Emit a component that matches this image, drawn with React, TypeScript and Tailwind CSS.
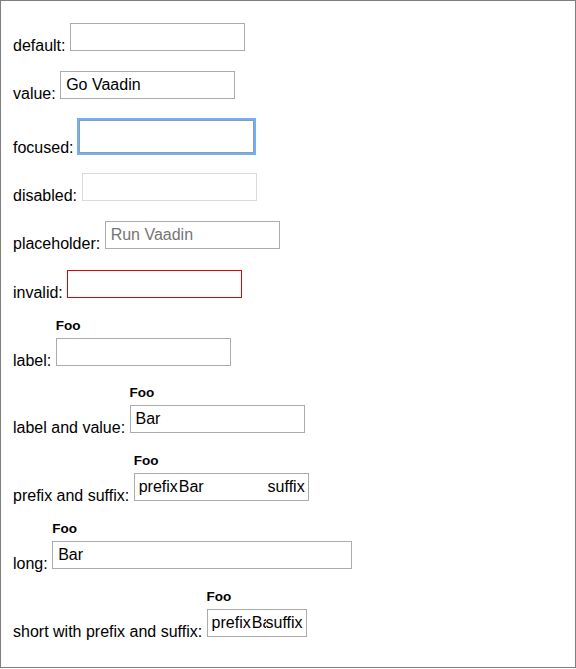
import React from "react";

type FieldProps = {
  width?: string;
  value?: string;
  placeholder?: string;
  prefix?: string;
  suffix?: string;
  variant?: "default" | "focused" | "disabled" | "invalid";
};

function Field({ width = "w-[175px]", value, placeholder, prefix, suffix, variant = "default" }: FieldProps) {
  const border =
    variant === "disabled"
      ? "border-[#dadada]"
      : variant === "invalid"
      ? "border-[#e00000]"
      : variant === "focused"
      ? "border-[#9a9a9a] outline-2 outline-solid outline-[#6ab2ff] ml-[1px] h-[33px]"
      : "border-[#ababab]";
  const height = variant === "focused" ? "" : "h-[28px]";
  return (
    <div className={`${width} ${height} ${border} border bg-white flex items-center pl-[4px] pr-[3px] box-border overflow-hidden`}>
      {prefix && <span className="shrink-0 whitespace-nowrap">{prefix}</span>}
      <span className="flex-1 min-w-0 overflow-hidden whitespace-nowrap">
        {value ? (
          <span className="pl-[1px]">{value}</span>
        ) : placeholder ? (
          <span className="pl-[1px] text-[#757575]">{placeholder}</span>
        ) : null}
      </span>
      {suffix && <span className="shrink-0 whitespace-nowrap">{suffix}</span>}
    </div>
  );
}

function Row({
  text,
  mt,
  label,
  children,
}: {
  text: string;
  mt: string;
  label?: string;
  children: React.ReactNode;
}) {
  return (
    <div className={`flex items-end ${mt}`}>
      <span className="whitespace-pre leading-[16px] mb-[-3px]">{text} </span>
      <div className="flex flex-col">
        {label && <span className="text-[13.5px] font-bold leading-[16px] mb-[4px]">{label}</span>}
        {children}
      </div>
    </div>
  );
}

export default function App() {
  return (
    <div
      className="w-[576px] h-[668px] border border-[#7f7f7f] box-border bg-white text-black text-[16px] pl-[12px] pt-[22px]"
      style={{ fontFamily: "'Liberation Sans', Arial, sans-serif" }}
    >
      <Row text="default:" mt="mt-0">
        <Field />
      </Row>
      <Row text="value:" mt="mt-[20px]">
        <Field value="Go Vaadin" />
      </Row>
      <Row text="focused:" mt="mt-[21px]">
        <Field variant="focused" />
      </Row>
      <Row text="disabled:" mt="mt-[20px]">
        <Field variant="disabled" />
      </Row>
      <Row text="placeholder:" mt="mt-[20px]">
        <Field placeholder="Run Vaadin" />
      </Row>
      <Row text="invalid:" mt="mt-[21px]">
        <Field variant="invalid" />
      </Row>
      <Row text="label:" mt="mt-[20px]" label="Foo">
        <Field />
      </Row>
      <Row text="label and value:" mt="mt-[19px]" label="Foo">
        <Field value="Bar" />
      </Row>
      <Row text="prefix and suffix:" mt="mt-[20px]" label="Foo">
        <Field value="Bar" prefix="prefix" suffix="suffix" />
      </Row>
      <Row text="long:" mt="mt-[20px]" label="Foo">
        <Field width="w-[300px]" value="Bar" />
      </Row>
      <Row text="short with prefix and suffix:" mt="mt-[20px]" label="Foo">
        <Field width="w-[100px]" value="Bar" prefix="prefix" suffix="suffix" />
      </Row>
    </div>
  );
}
